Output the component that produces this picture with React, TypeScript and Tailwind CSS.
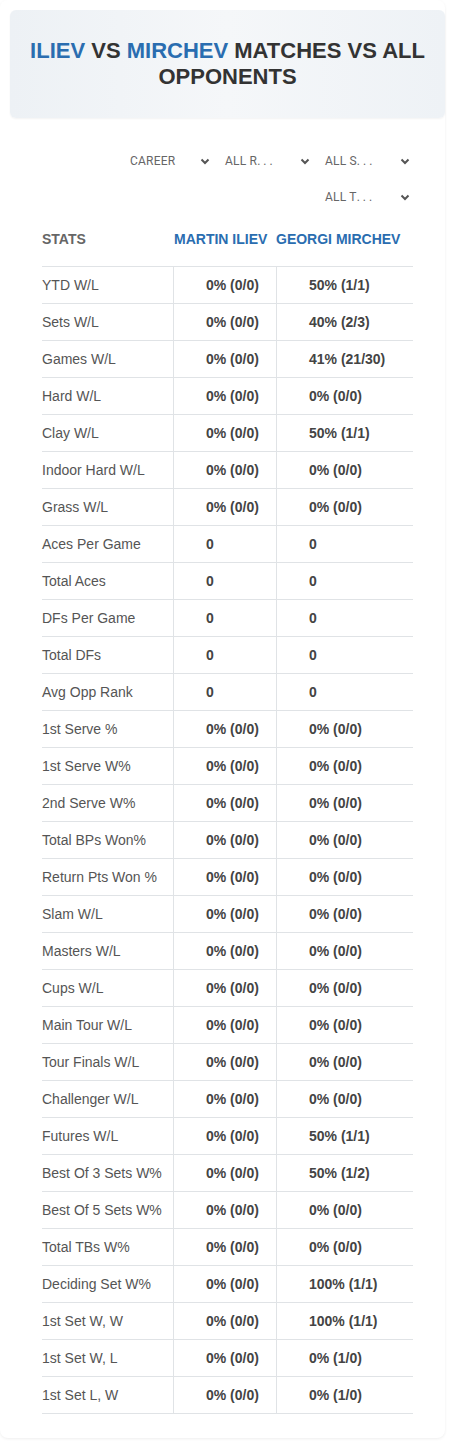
import React from "react";

const rows: [string, string, string][] = [
  ["YTD W/L", "0% (0/0)", "50% (1/1)"],
  ["Sets W/L", "0% (0/0)", "40% (2/3)"],
  ["Games W/L", "0% (0/0)", "41% (21/30)"],
  ["Hard W/L", "0% (0/0)", "0% (0/0)"],
  ["Clay W/L", "0% (0/0)", "50% (1/1)"],
  ["Indoor Hard W/L", "0% (0/0)", "0% (0/0)"],
  ["Grass W/L", "0% (0/0)", "0% (0/0)"],
  ["Aces Per Game", "0", "0"],
  ["Total Aces", "0", "0"],
  ["DFs Per Game", "0", "0"],
  ["Total DFs", "0", "0"],
  ["Avg Opp Rank", "0", "0"],
  ["1st Serve %", "0% (0/0)", "0% (0/0)"],
  ["1st Serve W%", "0% (0/0)", "0% (0/0)"],
  ["2nd Serve W%", "0% (0/0)", "0% (0/0)"],
  ["Total BPs Won%", "0% (0/0)", "0% (0/0)"],
  ["Return Pts Won %", "0% (0/0)", "0% (0/0)"],
  ["Slam W/L", "0% (0/0)", "0% (0/0)"],
  ["Masters W/L", "0% (0/0)", "0% (0/0)"],
  ["Cups W/L", "0% (0/0)", "0% (0/0)"],
  ["Main Tour W/L", "0% (0/0)", "0% (0/0)"],
  ["Tour Finals W/L", "0% (0/0)", "0% (0/0)"],
  ["Challenger W/L", "0% (0/0)", "0% (0/0)"],
  ["Futures W/L", "0% (0/0)", "50% (1/1)"],
  ["Best Of 3 Sets W%", "0% (0/0)", "50% (1/2)"],
  ["Best Of 5 Sets W%", "0% (0/0)", "0% (0/0)"],
  ["Total TBs W%", "0% (0/0)", "0% (0/0)"],
  ["Deciding Set W%", "0% (0/0)", "100% (1/1)"],
  ["1st Set W, W", "0% (0/0)", "100% (1/1)"],
  ["1st Set W, L", "0% (0/0)", "0% (1/0)"],
  ["1st Set L, W", "0% (0/0)", "0% (1/0)"],
];

const Chevron = () => (
  <svg width="10" height="7" viewBox="0 0 10 7" className="shrink-0">
    <path d="M1.5 1.5 L5 5 L8.5 1.5" fill="none" stroke="#555" strokeWidth="2" />
  </svg>
);

const Select = ({ label, cut, first }: { label: string; cut?: boolean; first?: boolean }) => (
  <div
    className={`w-[90px] h-[36px] flex items-center justify-between pr-[3px] text-[12px] text-[#666] font-['Roboto',sans-serif] ${
      first ? "pl-[7px]" : "pl-[2px]"
    }`}
  >
    <span className="tracking-[0.2px]">
      {label}
      {cut && <span className="tracking-[3px]">...</span>}
    </span>
    <Chevron />
  </div>
);

const App = () => {
  return (
    <div className="bg-white min-h-[1448px] font-['Liberation_Sans',Arial,sans-serif]">
      <div className="w-[445px] rounded-lg shadow-[0_1px_3px_rgba(0,0,0,0.07)] pt-[10px] pb-[24px]">
        <div className="ml-[10px] w-[435px] h-[108px] rounded-md bg-gradient-to-r from-[#edf1f5] via-[#f5f7f9] to-[#eef2f6] shadow-[0_1px_2px_rgba(0,0,0,0.05)] flex items-center justify-center px-[12px]">
          <h1 className="text-center text-[22px] leading-[26px] font-bold text-[#333] uppercase">
            <span className="text-[#2a6db0]">Iliev</span> vs{" "}
            <span className="text-[#2a6db0]">Mirchev</span> matches vs all opponents
          </h1>
        </div>

        <div className="ml-[42px] w-[371px] mt-[25px] flex flex-wrap justify-end gap-x-[10px]">
          <Select label="CAREER" first />
          <Select label="ALL R" cut />
          <Select label="ALL S" cut />
          <Select label="ALL T" cut />
        </div>

        <div className="ml-[42px] w-[371px]">
          <div className="grid grid-cols-[131px_103px_137px] h-[52px] pt-[14px] text-[14px] leading-[20px] font-bold border-b border-[#e0e3e6]">
            <div className="text-[#666]">STATS</div>
            <div className="text-[#2a6db0] pl-[1px] whitespace-nowrap">MARTIN ILIEV</div>
            <div className="text-[#2a6db0] whitespace-nowrap">GEORGI MIRCHEV</div>
          </div>
          {rows.map(([label, a, b]) => (
            <div
              key={label}
              className="grid grid-cols-[131px_103px_137px] h-[37px] border-b border-[#e0e3e6] text-[14px] items-stretch"
            >
              <div className="flex items-center text-[#555]">{label}</div>
              <div className="flex items-center pl-[32px] border-l border-[#e0e3e6] font-bold text-[#444]">{a}</div>
              <div className="flex items-center pl-[32px] border-l border-[#e0e3e6] font-bold text-[#444]">{b}</div>
            </div>
          ))}
        </div>
      </div>
    </div>
  );
};

export default App;
